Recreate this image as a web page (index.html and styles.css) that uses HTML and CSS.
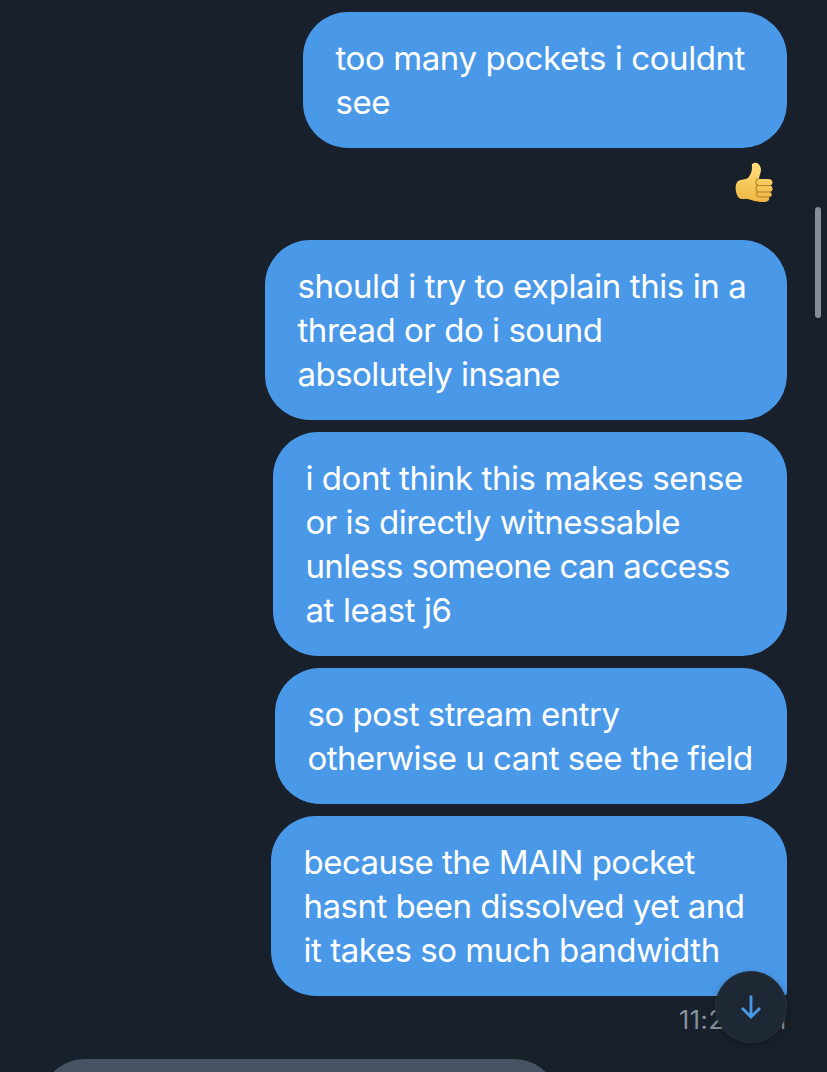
FILE: index.html
```html
<!DOCTYPE html>
<html lang="en">
<head>
<meta charset="utf-8">
<title>Messages</title>
<link rel="stylesheet" href="styles.css">
</head>
<body>
<main class="chat">
  <div class="bubble b-pockets"><span class="loose">too many pockets i couldnt</span><span>see</span></div>
  <div class="reaction">
    <svg width="40" height="44" viewBox="0 0 40 44" role="img" aria-label="Thumbs up">
      <defs>
        <linearGradient id="skin" x1="0" y1="0" x2="0" y2="1">
          <stop offset="0" stop-color="#ffe07a"/>
          <stop offset="1" stop-color="#efb544"/>
        </linearGradient>
      </defs>
      <path fill="url(#skin)" d="M4 20C7 18 11 19 14 17C16 14 18 11 18 7C18 4 17 3 20 2C24 1 27 5 27 9C27 12 25 15 25 18L35 18C40 19 39 24 36 24.500C40 26 39 30 36 31C39 33 38 36 35 36C36 39 34 41 30 41C22 41 18 39 14 38C9 38 5 39 3 34C1 29 1 23 4 20Z"/>
      <path fill="none" stroke="#b98228" stroke-width="1.200" stroke-linecap="round" d="M24 18C21 20 21 23 24 24.500L36 24.500M23 25C21 27 22 30 24 31L36 31M23 31C22 33 23 35 25 36L35 36"/>
    </svg>
  </div>
  <div class="bubble b-thread"><span class="loose">should i try to explain this in a</span><span>thread or do i sound</span><span class="snug">absolutely insane</span></div>
  <div class="bubble b-sense"><span>i dont think this makes sense</span><span>or is directly witnessable</span><span class="tight">unless someone can access</span><span class="loose">at least j6</span></div>
  <div class="bubble b-field"><span>so post stream entry</span><span class="snug">otherwise u cant see the field</span></div>
  <div class="bubble b-main"><span class="snug">because the MAIN pocket</span><span class="snug">hasnt been dissolved yet and</span><span>it takes so much bandwidth</span></div>
  <div class="time">11:27 PM</div>
  <div class="incoming"></div>
</main>
<div class="scrollbar"></div>
<button class="jump" aria-label="Scroll to bottom">
  <svg width="22" height="26" viewBox="0 0 22 26"><path d="M11 1.500V23M2 14L11 23L20 14"/></svg>
</button>
</body>
</html>
```
FILE: styles.css
```css
* { box-sizing: border-box; }
body {
  margin: 0;
  height: 1072px;
  overflow: hidden;
  position: relative;
  background: #18202b;
  font-family: Inter, "Liberation Sans", sans-serif;
}
.chat {
  height: 1072px;
  padding: 12px 40px 0;
  display: flex;
  flex-direction: column;
  align-items: flex-end;
  overflow: hidden;
}
.bubble {
  flex: none;
  margin-bottom: 12px;
  padding: 24px 0 24px 32.5px;
  border-radius: 45px;
  background: #4a99e9;
  color: #fff;
  font-size: 33px;
  line-height: 44px;
  letter-spacing: -.46px;
}
.bubble span { display: block; white-space: nowrap; }
.bubble .loose { letter-spacing: -.41px; }
.bubble .snug { letter-spacing: -.52px; }
.bubble .tight { letter-spacing: -.64px; }
.b-pockets { width: 484px; margin-bottom: 0; }
.b-thread { width: 522px; }
.b-sense { width: 514px; }
.b-field { width: 512px; }
.b-main { width: 516px; border-bottom-right-radius: 4px; }
.reaction { flex: none; height: 92px; padding: 13px 13px 0 0; }
.reaction svg { display: block; }
.time {
  flex: none;
  height: 51px;
  color: #89929c;
  font-size: 25px;
  line-height: 24px;
  letter-spacing: .7px;
}
.incoming {
  flex: none;
  align-self: flex-start;
  width: 519px;
  height: 90px;
  border-radius: 45px;
  background: #475362;
}
.scrollbar {
  position: absolute;
  left: 815px;
  top: 207px;
  width: 6px;
  height: 111px;
  border-radius: 3px;
  background: #868d94;
}
.jump {
  position: absolute;
  left: 715px;
  top: 971px;
  width: 72px;
  height: 72px;
  padding: 0;
  display: flex;
  align-items: center;
  justify-content: center;
  border: 1px solid #26303c;
  border-radius: 50%;
  background: #1e2835;
  box-shadow: 0 2px 8px rgba(0, 0, 0, .22);
}
.jump svg { fill: none; stroke: #4a99e9; stroke-width: 2.8; }
```
